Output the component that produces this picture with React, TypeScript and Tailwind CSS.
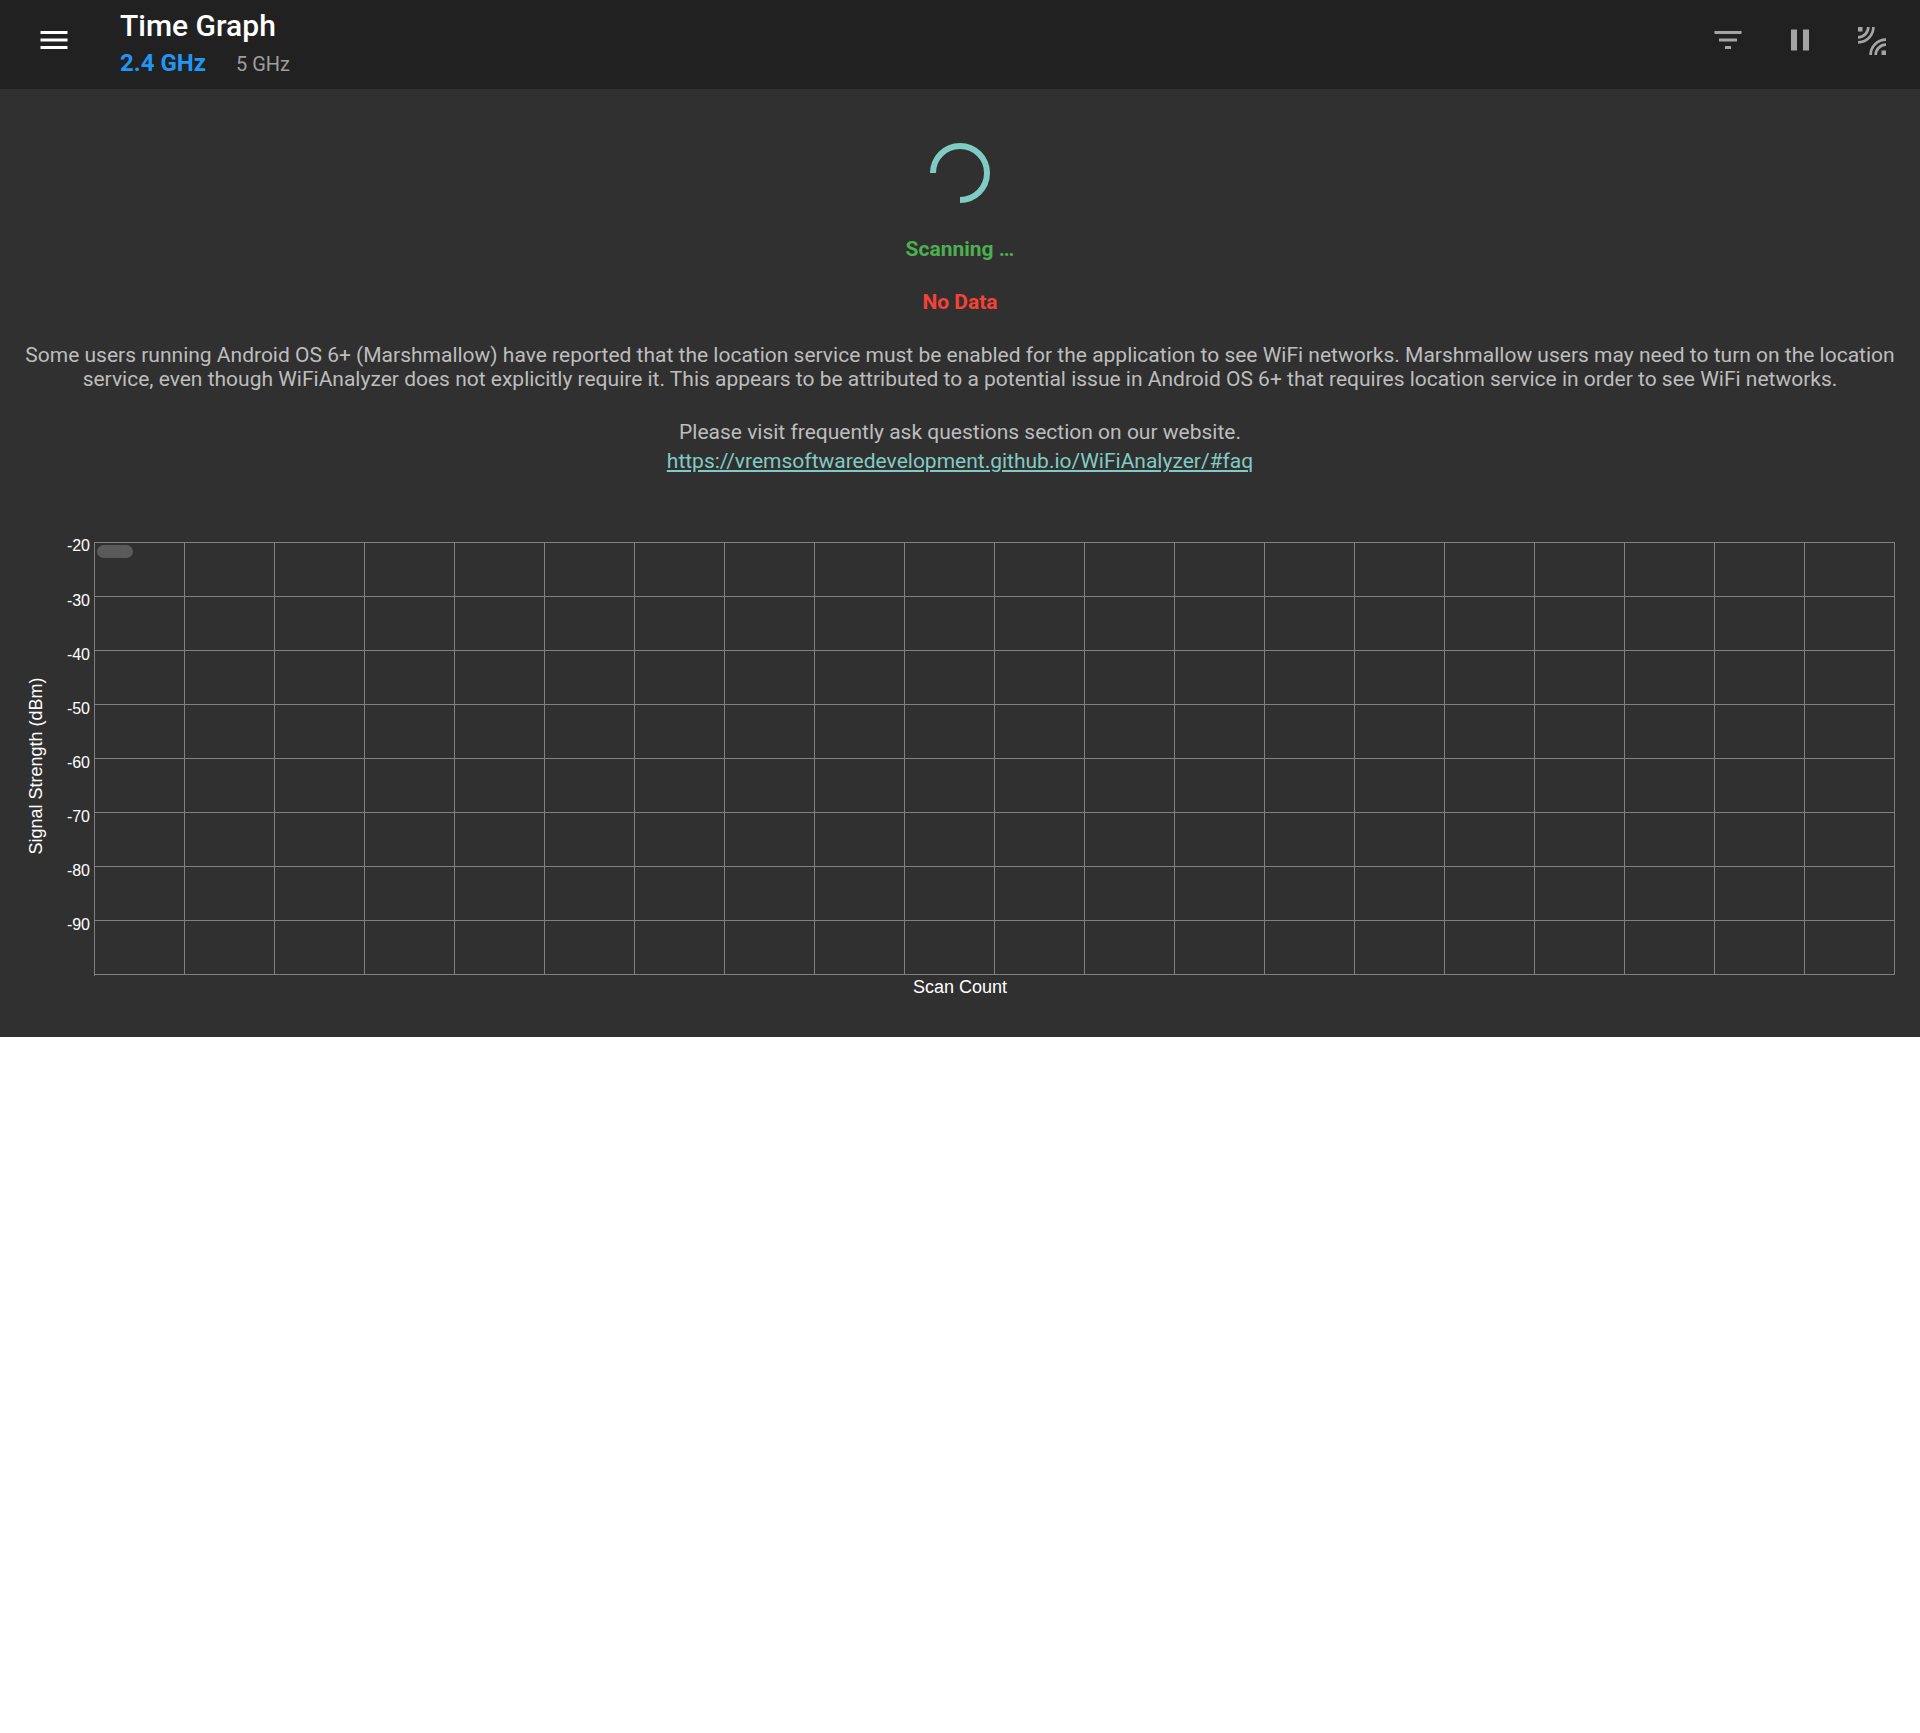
const yTicks = [-20, -30, -40, -50, -60, -70, -80, -90];
const columns = Array.from({ length: 20 }, (_, index) => index);

function MaterialIcon({ d, className }: { d: string; className: string }) {
  return (
    <svg viewBox="0 0 24 24" className={`h-9 w-9 ${className}`} fill="currentColor">
      <path d={d} />
    </svg>
  );
}

function ScannerIcon() {
  return (
    <svg viewBox="0 0 36 36" className="h-9 w-9 text-[#a5a5a5]" fill="none" stroke="currentColor" strokeWidth="2.7">
      <rect x="4" y="5" width="4.5" height="4.5" fill="currentColor" stroke="none" />
      <path d="M14.3 5A10.3 10.3 0 0 1 4 15.3" />
      <path d="M19.4 5A15.4 15.4 0 0 1 4 20.4" />
      <rect x="27.5" y="28.5" width="4.5" height="4.5" fill="currentColor" stroke="none" />
      <path d="M32 22.7A10.3 10.3 0 0 0 21.7 33" />
      <path d="M32 17.6A15.4 15.4 0 0 0 16.6 33" />
    </svg>
  );
}

function Chart() {
  return (
    <div className="mr-[1px] flex h-[434px]">
      <div className="relative w-[38px] shrink-0">
        {/* rotated axis title */}
        <span className="absolute left-[11.5px] top-[224px] -translate-x-1/2 -translate-y-1/2 -rotate-90 whitespace-nowrap font-['Liberation_Sans',sans-serif] text-[18px] leading-none text-white">
          Signal Strength (dBm)
        </span>
      </div>
      <div className="-mt-[5px] flex w-[32px] shrink-0 flex-col">
        {yTicks.map((tick) => (
          <div
            key={tick}
            className="h-[54px] pr-1 text-right font-['Liberation_Sans',sans-serif] text-[16px] leading-[18px] text-white first:h-[55px]"
          >
            {tick}
          </div>
        ))}
      </div>
      <div className="relative flex flex-1 flex-col border-l-1 border-t-1 border-[#808080]">
        <div className="absolute left-[2px] top-[2px] h-[13px] w-[36px] rounded-[7px] bg-[#5a5a5a]" />
        {yTicks.map((tick) => (
          <div key={tick} className="flex h-[54px] first:h-[55px]">
            {columns.map((column) => (
              <div key={column} className="flex-1 border-b-1 border-r-1 border-[#808080]" />
            ))}
          </div>
        ))}
      </div>
    </div>
  );
}

export default function App() {
  return (
    <div className="min-h-[1733px] bg-white font-['Roboto',sans-serif]">
      <header className="flex h-[89px] items-start bg-[#212121]">
        <MaterialIcon
          d="M3 18h18v-2H3v2zm0-5h18v-2H3v2zm0-7v2h18V6H3z"
          className="ml-9 mt-[22px] text-white"
        />
        <div className="ml-[48px] flex-1 pt-[8px]">
          <div className="text-[30px] font-medium leading-[36px] text-white">Time Graph</div>
          <div className="mt-[7px] flex items-baseline leading-[24px]">
            <span className="text-[24px] font-bold text-[#2196f3]">2.4 GHz</span>
            <span className="ml-[30px] text-[20px] text-[#9e9e9e]">5 GHz</span>
          </div>
        </div>
        <div className="mr-[30px] mt-[22px] flex gap-[36px]">
          <MaterialIcon d="M10 18h4v-2h-4v2zM3 6v2h18V6H3zm3 7h12v-2H6v2z" className="text-[#a5a5a5]" />
          <MaterialIcon d="M6 19h4V5H6v14zm8-14v14h4V5h-4z" className="text-[#a5a5a5]" />
          <ScannerIcon />
        </div>
      </header>

      <main className="h-[948px] bg-[#303030] px-[24px] text-center text-[21px] leading-[24px] text-[#bdbdbd]">
        <div className="flex justify-center pt-[54px]">
          <svg viewBox="0 0 60 60" className="h-[60px] w-[60px]" fill="none">
            <path d="M3 30A27 27 0 1 1 30 57" stroke="#80cbc4" strokeWidth="6" />
          </svg>
        </div>
        <div className="mt-[34px] font-bold text-[#4caf50]">Scanning …</div>
        <div className="mt-[29px] font-bold text-[#f44336]">No Data</div>
        <p className="mt-[29px]">
          Some users running Android OS 6+ (Marshmallow) have reported that the location service must be enabled for the
          application to see WiFi networks. Marshmallow users may need to turn on the location service, even though
          WiFiAnalyzer does not explicitly require it. This appears to be attributed to a potential issue in Android OS
          6+ that requires location service in order to see WiFi networks.
        </p>
        <p className="mt-[29px]">Please visit frequently ask questions section on our website.</p>
        <a className="mt-[5px] block text-[#80cbc4] underline">
          https://vremsoftwaredevelopment.github.io/WiFiAnalyzer/#faq
        </a>
        <div className="mt-[69px]">
          <Chart />
        </div>
        <div className="-mt-[1px] font-['Liberation_Sans',sans-serif] text-[18px] leading-[24px] text-white">
          Scan Count
        </div>
      </main>
    </div>
  );
}
